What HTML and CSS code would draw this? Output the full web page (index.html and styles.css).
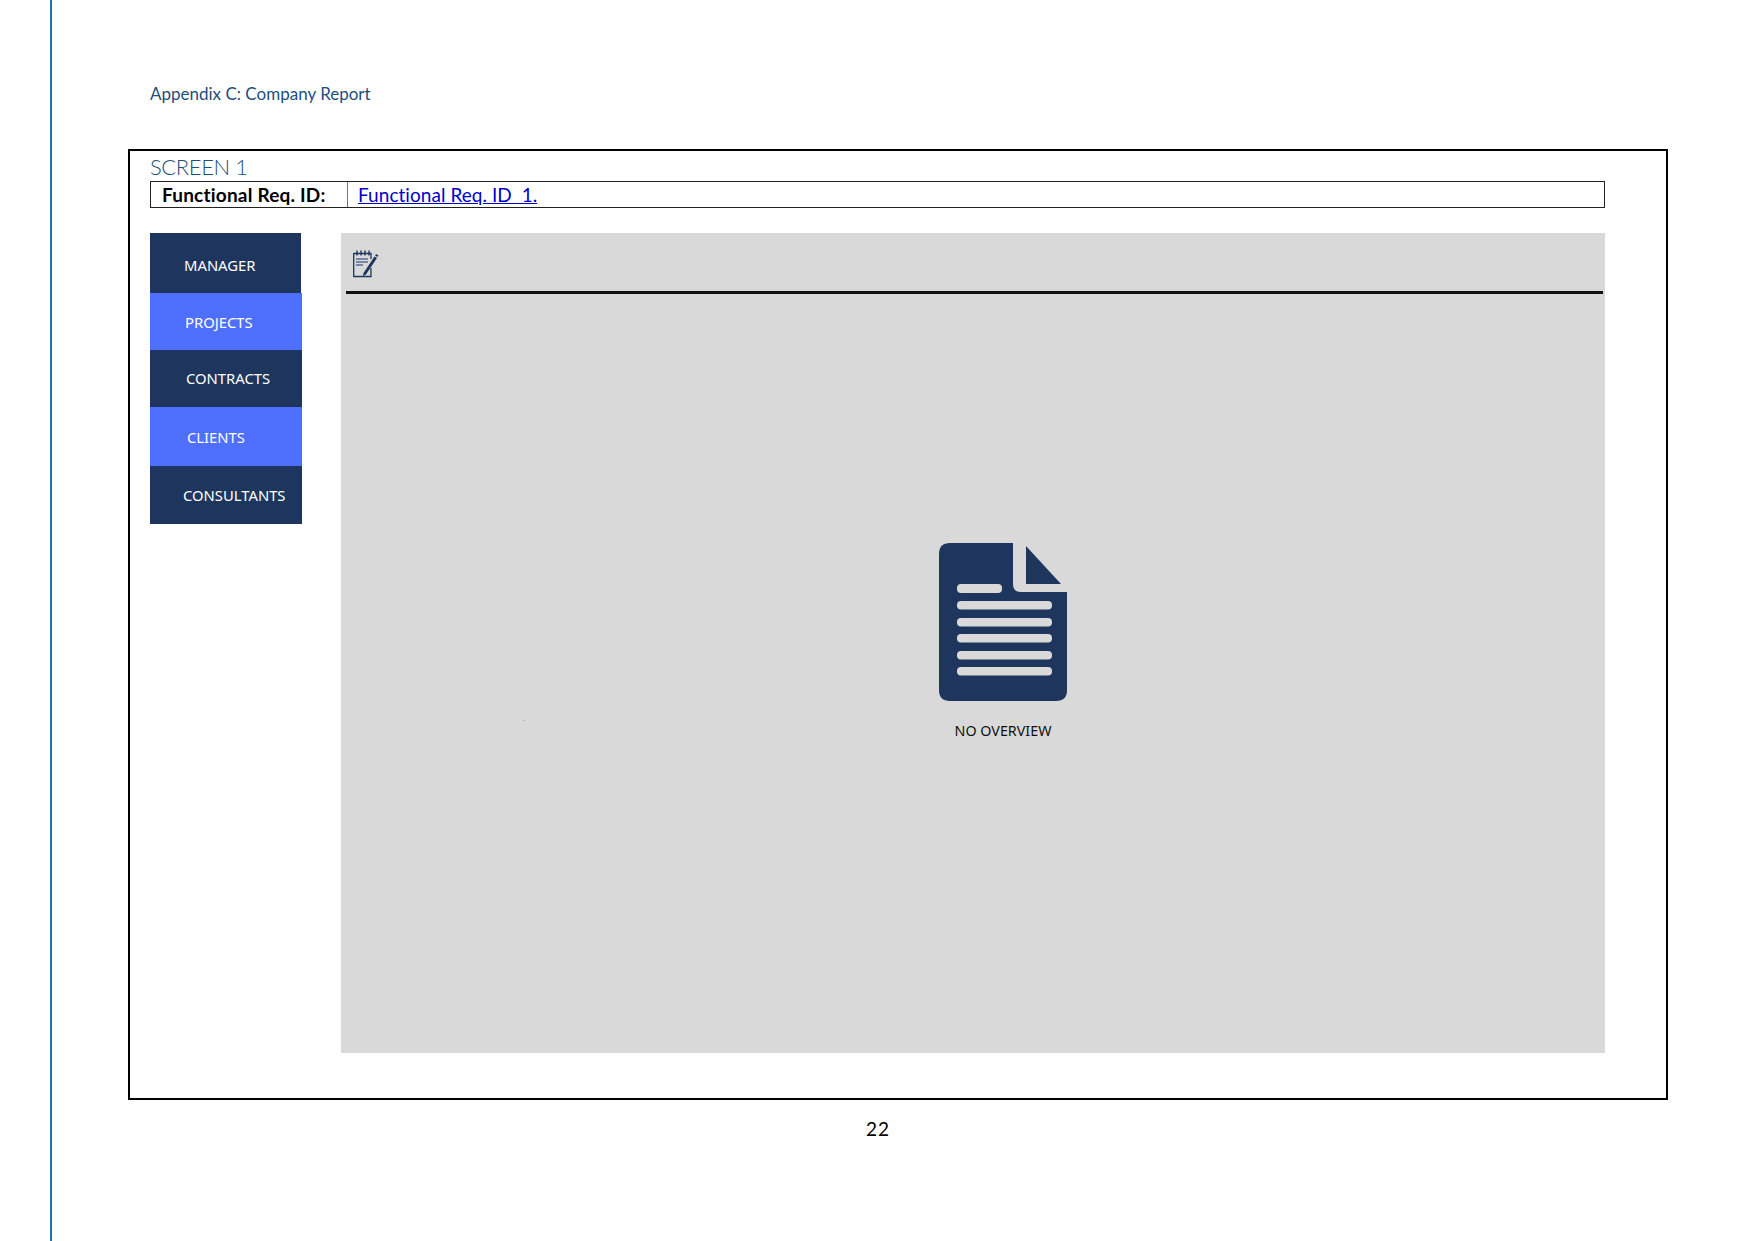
FILE: index.html
```html
<!DOCTYPE html>
<html lang="en">
<head>
<meta charset="utf-8">
<title>Appendix C: Company Report</title>
<link rel="stylesheet" href="styles.css">
</head>
<body>
<div class="page">
  <p class="appendix">Appendix C: Company Report</p>
  <section class="frame">
    <h2 class="screen-title">SCREEN 1</h2>
    <div class="req">
      <div class="req-label">Functional Req. ID:</div>
      <div class="req-value"><a href="#">Functional Req. ID&nbsp; 1.</a></div>
    </div>
    <div class="workspace">
      <nav class="nav">
        <div class="nav-item navy manager">MANAGER</div>
        <div class="nav-item bright projects">PROJECTS</div>
        <div class="nav-item navy contracts">CONTRACTS</div>
        <div class="nav-item bright clients">CLIENTS</div>
        <div class="nav-item navy consultants">CONSULTANTS</div>
      </nav>
      <main class="panel">
        <div class="toolbar">
          <svg class="note-icon" width="26" height="29" viewBox="0 0 26 29" fill="none" stroke="#1e365e">
            <path d="M2 4.5H18V10M18 19V27.5H0.7V4.5H2" stroke-width="1.3"/>
            <path d="M4 1.5V6.5M8 1.5V6.5M12 1.5V6.5M16 1.5V6.5" stroke-width="1.4"/>
            <path d="M3 10H15M3 13H15M3 16H10" stroke="#5a6f94" stroke-width="1.5"/>
            <path d="M10.5 24L21.5 7.5L24 9L13 25.5L10 27Z" fill="#1e365e" stroke="none"/>
            <path d="M23 5L25.5 6.5L24.5 8L22.2 6.5Z" fill="#1e365e" stroke="none"/>
          </svg>
        </div>
        <div class="empty">
          <svg class="doc-icon" width="128" height="158" viewBox="0 0 128 158">
            <path fill="#1e365e" d="M11 0H74V41Q74 49 82 49H128V147Q128 158 117 158H11Q0 158 0 147V11Q0 0 11 0Z"/>
            <path fill="#1e365e" d="M87 3V41H122Z"/>
            <g fill="#d9d9d9">
              <rect x="18" y="41" width="45" height="9" rx="4"/>
              <rect x="18" y="58" width="95" height="8.5" rx="4"/>
              <rect x="18" y="75" width="95" height="8.5" rx="4"/>
              <rect x="18" y="91" width="95" height="8.5" rx="4"/>
              <rect x="18" y="108" width="95" height="8.5" rx="4"/>
              <rect x="18" y="124" width="95" height="8.5" rx="4"/>
            </g>
          </svg>
          <div class="empty-label">NO OVERVIEW</div>
        </div>
        <span class="speck"></span>
      </main>
    </div>
  </section>
  <div class="page-number">22</div>
</div>
</body>
</html>
```
FILE: styles.css
```css
* { box-sizing: border-box; }
html, body { margin: 0; padding: 0; background: #fff; }
body { font-family: "Lato", "Liberation Sans", sans-serif; font-variant-ligatures: none; }
.page {
  width: 1755px;
  height: 1241px;
  overflow: hidden;
  margin-left: 50px;
  border-left: 2px solid #2272a8;
  padding: 83px 0 0 76px;
}
.appendix {
  margin: 0 0 0 22px;
  height: 66px;
  font-size: 17px;
  line-height: 22px;
  font-weight: 400;
  color: #1f4e79;
}
.frame {
  width: 1540px;
  height: 951px;
  border: 2px solid #000;
  padding: 0 0 0 20px;
}
.screen-title {
  margin: 0;
  height: 30px;
  font-size: 22px;
  line-height: 31px;
  font-weight: 300;
  letter-spacing: -0.4px;
  color: #1f4e79;
}
.req {
  display: grid;
  grid-template-columns: 197px 1fr;
  width: 1455px;
  height: 27px;
  border: 1px solid #222;
  font-size: 19px;
  line-height: 25px;
  color: #000;
}
.req-label { padding-left: 11px; font-weight: 700; letter-spacing: 0.2px; border-right: 1px solid #777; }
.req-value { padding-left: 10px; letter-spacing: 0.05px; }
.req-value a { color: #0000cc; text-decoration: underline; }
.workspace {
  display: grid;
  grid-template-columns: 152px 1264px;
  column-gap: 39px;
  margin-top: 25px;
}
.nav {
  display: grid;
  grid-template-rows: 60px 57px 57px 59px 58px;
  align-self: start;
  font-family: "Noto Sans", sans-serif;
  font-size: 14.8px;
  color: #fff;
}
.nav-item { display: flex; align-items: center; }
.navy { background: #1e365e; }
.bright { background: #4f6fff; }
.manager { padding: 4px 0 0 34px; margin-right: 1px; }
.projects { padding-left: 35px; }
.contracts { padding: 0 0 2px 36px; }
.clients { padding: 1px 0 0 37px; }
.consultants { padding: 0 0 1px 33px; }
.panel {
  position: relative;
  height: 820px;
  background: #d9d9d9;
  padding: 0 2px 0 5px;
}
.toolbar {
  height: 61px;
  border-bottom: 3px solid #111;
  padding: 16px 0 0 7px;
}
.note-icon { display: block; }
.empty {
  display: flex;
  flex-direction: column;
  align-items: center;
  padding: 249px 0 0 60px;
  margin-left: -5px;
  margin-right: -2px;
}
.doc-icon { display: block; }
.empty-label {
  margin-top: 20px;
  font-family: "Noto Sans", sans-serif;
  font-size: 14.3px;
  line-height: 20px;
  color: #111;
}
.speck {
  position: absolute;
  left: 183px;
  top: 487px;
  width: 1px;
  height: 1px;
  background: #999;
}
.page-number {
  margin: 17px 0 0 0;
  padding-left: 738px;
  font-size: 19px;
  line-height: 24px;
  letter-spacing: 1px;
  color: #000;
}
```
